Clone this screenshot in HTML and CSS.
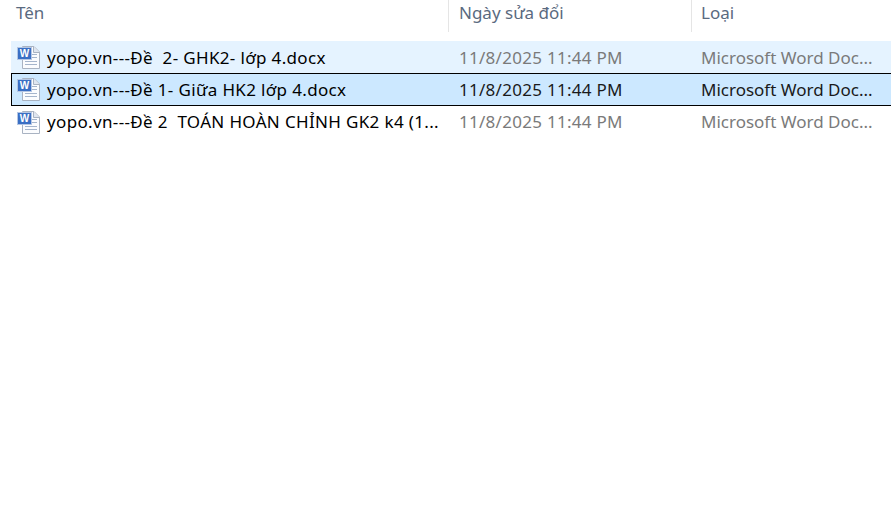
FILE: index.html
```html
<!DOCTYPE html>
<html lang="vi">
<head>
    <meta charset="UTF-8">
    <meta name="viewport" content="width=device-width, initial-scale=1.0">
    <title>Thư mục</title>
    <link rel="stylesheet" href="styles.css">
</head>
<body>
    <div class="headers">
        <div class="col-name head">Tên</div>
        <div class="col-date head sep">Ngày sửa đổi</div>
        <div class="col-type head sep">Loại</div>
    </div>

    <div class="list">
        <div class="row hover">
            <div class="col-name file">
                <svg class="icon" viewBox="0 0 23 23">
                    <path d="M5.5 0.5H17L22.5 6V22.5H5.5Z" fill="#fbfcfe" stroke="#a9b3c2"/>
                    <path d="M16.5 0.5V6.5H22.5" fill="#dfe6f0" stroke="#a9b3c2"/>
                    <path d="M15 8.5H20M15 11.5H20M8 15.5H20M8 18.5H20" stroke="#a5b5cc"/>
                    <rect x="0.5" y="1.5" width="14" height="12" fill="#3a6fc4" stroke="#b4c6e4"/>
                    <text class="icon-letter" x="7.5" y="11.4">W</text>
                </svg>
                <span class="fname">yopo.vn---Đề&nbsp; 2- GHK2- lớp 4.docx</span>
            </div>
            <div class="col-date muted">11/8/2025 11:44 PM</div>
            <div class="col-type muted">Microsoft Word Doc...</div>
        </div>
        <div class="row selected">
            <div class="col-name file">
                <svg class="icon" viewBox="0 0 23 23">
                    <path d="M5.5 0.5H17L22.5 6V22.5H5.5Z" fill="#fbfcfe" stroke="#a9b3c2"/>
                    <path d="M16.5 0.5V6.5H22.5" fill="#dfe6f0" stroke="#a9b3c2"/>
                    <path d="M15 8.5H20M15 11.5H20M8 15.5H20M8 18.5H20" stroke="#a5b5cc"/>
                    <rect x="0.5" y="1.5" width="14" height="12" fill="#3a6fc4" stroke="#b4c6e4"/>
                    <text class="icon-letter" x="7.5" y="11.4">W</text>
                </svg>
                <span class="fname">yopo.vn---Đề 1- Giữa HK2 lớp 4.docx</span>
            </div>
            <div class="col-date">11/8/2025 11:44 PM</div>
            <div class="col-type">Microsoft Word Doc...</div>
        </div>
        <div class="row">
            <div class="col-name file">
                <svg class="icon" viewBox="0 0 23 23">
                    <path d="M5.5 0.5H17L22.5 6V22.5H5.5Z" fill="#fbfcfe" stroke="#a9b3c2"/>
                    <path d="M16.5 0.5V6.5H22.5" fill="#dfe6f0" stroke="#a9b3c2"/>
                    <path d="M15 8.5H20M15 11.5H20M8 15.5H20M8 18.5H20" stroke="#a5b5cc"/>
                    <rect x="0.5" y="1.5" width="14" height="12" fill="#3a6fc4" stroke="#b4c6e4"/>
                    <text class="icon-letter" x="7.5" y="11.4">W</text>
                </svg>
                <span class="fname">yopo.vn---Đề 2&nbsp; TOÁN HOÀN CHỈNH GK2 k4 (1...</span>
            </div>
            <div class="col-date muted">11/8/2025 11:44 PM</div>
            <div class="col-type muted">Microsoft Word Doc...</div>
        </div>
    </div>
</body>
</html>
```

FILE: styles.css
```css
body {
    margin: 0;
    background-color: #ffffff;
    font-family: "Noto Sans", "Open Sans", sans-serif;
    font-size: 17px;
    color: #1a1a1a;
    overflow: hidden;
}
.headers {
    display: flex;
    height: 32px;
    padding-left: 11px;
}
.head {
    color: #5a6a80;
    line-height: 26px;
}
.sep {
    border-left: 1px solid #e5e5e5;
}
.col-name {
    width: 437px;
    padding-left: 6px;
    box-sizing: border-box;
}
.col-date {
    width: 242px;
    padding-left: 11px;
    box-sizing: border-box;
}
.col-type {
    flex: 1;
    padding-left: 11px;
    box-sizing: border-box;
    white-space: nowrap;
}
.head.col-name {
    padding-left: 5px;
}
.head.col-date {
    width: 243px;
    padding-left: 10px;
}
.head.col-type {
    padding-left: 9px;
}
.list {
    margin-top: 9px;
    margin-left: 11px;
}
.row {
    display: flex;
    height: 32px;
    line-height: 32px;
    white-space: nowrap;
}
.row .col-date {
    letter-spacing: 0.28px;
}
.hover {
    background-color: #e5f3ff;
    line-height: 34px;
}
.selected {
    background-color: #cce8ff;
    box-shadow: inset 1px 1px 0 #000000, inset 0 -1px 0 #000000;
    height: 33px;
    line-height: 34px;
}
.file {
    display: flex;
    color: #000000;
}
.fname {
    letter-spacing: 0.35px;
}
.icon {
    width: 23px;
    height: 23px;
    margin-right: 7px;
    flex-shrink: 0;
    align-self: center;
}
.icon-letter {
    font-family: "Liberation Sans", sans-serif;
    font-size: 10px;
    font-weight: bold;
    fill: #ffffff;
    text-anchor: middle;
}
.muted {
    color: #7a7a7a;
}
```
